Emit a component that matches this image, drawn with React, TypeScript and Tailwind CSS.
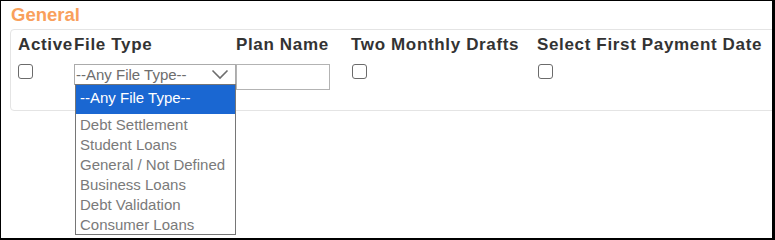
import React from "react";

const Checkbox = () => (
  <div className="w-[15px] h-[15px] rounded-[3px] border border-[#6b6b6b] bg-white" />
);

const options = [
  "Debt Settlement",
  "Student Loans",
  "General / Not Defined",
  "Business Loans",
  "Debt Validation",
  "Consumer Loans",
];

export default function App() {
  return (
    <div className="w-[775px] h-[240px] overflow-hidden bg-white border-l border-t border-r-[3px] border-b-2 border-black font-['Liberation_Sans',Arial,sans-serif]">
      <div className="pl-[10px] pt-[4px] text-[18.5px] leading-[20px] font-bold text-[#f9a05c]">
        General
      </div>
      <div className="ml-[9px] mt-[4px] w-[800px] h-[82px] border border-[#e4e4e4] rounded-[4px] pl-[7px] pt-[5px]">
        <div className="flex h-[20px] text-[17px] tracking-[0.65px] leading-[20px] font-bold text-[#333] whitespace-nowrap">
          <div className="w-[56px]">Active</div>
          <div className="w-[162px]">File Type</div>
          <div className="w-[115px]">Plan Name</div>
          <div className="w-[186px]">Two Monthly Drafts</div>
          <div>Select First Payment Date</div>
        </div>
        <div className="flex items-start mt-[9px]">
          <div className="w-[56px]">
            <Checkbox />
          </div>
          <div className="w-[162px] relative">
            <div className="h-[21px] border border-[#ababab] pl-[1px] text-[15px] leading-[20px] text-[#6d6d6d] relative">
              --Any File Type--
              <svg
                className="absolute left-[136px] top-[4px]"
                width="18"
                height="11"
                viewBox="0 0 18 11"
              >
                <path d="M1.5 1.5 L9 9 L16.5 1.5" fill="none" stroke="#6d6d6d" strokeWidth="1.6" />
              </svg>
            </div>
            <div className="absolute left-[1px] top-[20px] w-[161px] h-[151px] overflow-hidden border border-[#767676] bg-white z-10 text-[15px] leading-[20px]">
              <div className="h-[29px] pt-[3px] pl-[4px] bg-[#1a67d2] text-white">--Any File Type--</div>
              <div className="mt-[1px]">
                {options.map((o) => (
                  <div key={o} className="h-[20px] pl-[4px] text-[#7a7a7a] whitespace-nowrap">
                    {o}
                  </div>
                ))}
              </div>
            </div>
          </div>
          <div className="w-[115px]">
            <div className="w-[94px] h-[26px] border border-[#b3b3b3] bg-white" />
          </div>
          <div className="w-[186px] pl-[1px]">
            <Checkbox />
          </div>
          <div className="pl-[1px]">
            <Checkbox />
          </div>
        </div>
      </div>
    </div>
  );
}
